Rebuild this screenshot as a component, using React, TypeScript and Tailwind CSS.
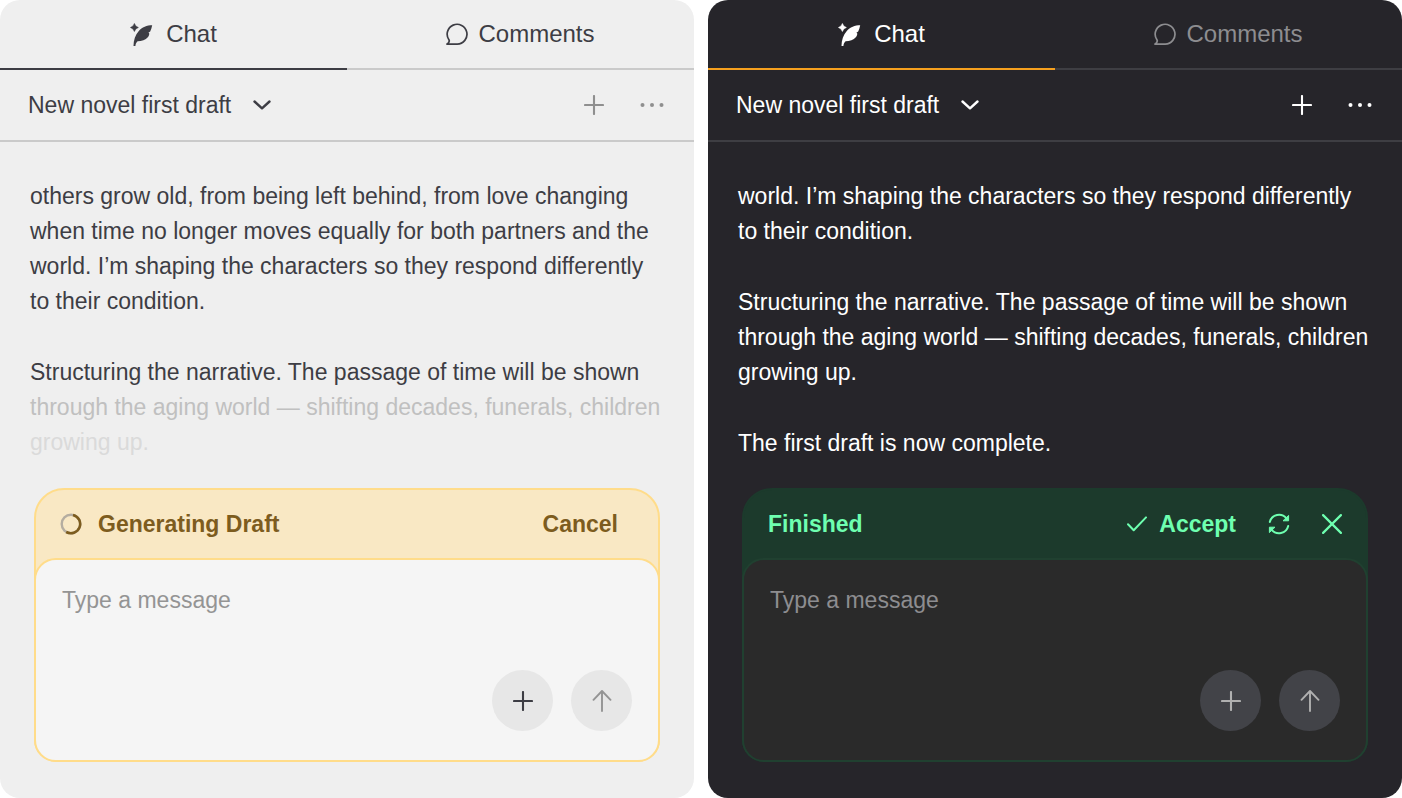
import React from 'react';
import clsx from 'clsx';

type Theme = 'light' | 'dark';

interface Line {
  text: string;
  tone?: 'faded' | 'faint';
}

interface ChatPanelProps {
  theme: Theme;
  paragraphs: Line[][];
  status: React.ReactNode;
}

const QuillIcon: React.FC = () => (
  <svg width="24" height="24" viewBox="0 0 24 24" fill="currentColor" aria-hidden="true">
    <path d="M4.4 1.4Q5.3 4.6 8.4 5.5Q5.3 6.4 4.4 9.6Q3.5 6.4 .4 5.5Q3.5 4.6 4.4 1.4Z" stroke="currentColor" strokeWidth=".5" />
    <path d="M22.2 3.3C17 3.3 12 5 8.6 9.2C5.4 13 3.5 18 3.5 24H5.4C5.6 21.8 6.3 20.4 7.6 19.2C11.5 19.2 15.8 18 17.8 15.2C18.7 14 19.3 12.8 19.3 11.4L18.4 10.8L20.2 9.4C21.1 7.5 21.8 5.5 22.2 3.3Z" />
  </svg>
);

const BubbleIcon: React.FC = () => (
  <svg width="22" height="22" viewBox="0 0 22 22" fill="none" stroke="currentColor" strokeWidth="1.7" strokeLinejoin="round" aria-hidden="true">
    <path d="M.9 21.1H11.2A9.9 9.9 0 1 0 2.9 16.8C3.9 18.3 3 19.6 .9 21.1Z" />
  </svg>
);

const ChevronIcon: React.FC = () => (
  <svg width="18" height="10" viewBox="0 0 18 10" fill="none" stroke="currentColor" strokeWidth="2.4" strokeLinecap="round" strokeLinejoin="round" aria-hidden="true">
    <path d="M1.5 1.5L9 8.3L16.5 1.5" />
  </svg>
);

const PlusIcon: React.FC = () => (
  <svg width="20" height="20" viewBox="0 0 20 20" fill="none" stroke="currentColor" strokeWidth="2.1" strokeLinecap="round" aria-hidden="true">
    <path d="M10 1V19M1 10H19" />
  </svg>
);

const DotsIcon: React.FC = () => (
  <svg width="24" height="20" viewBox="0 0 24 20" fill="currentColor" aria-hidden="true">
    <circle cx="2.5" cy="10" r="2" />
    <circle cx="12" cy="10" r="2" />
    <circle cx="21.5" cy="10" r="2" />
  </svg>
);

const ArrowUpIcon: React.FC = () => (
  <svg width="20" height="22" viewBox="0 0 20 22" fill="none" stroke="currentColor" strokeWidth="1.9" strokeLinecap="round" strokeLinejoin="round" aria-hidden="true">
    <path d="M10 21V1M1.5 9.8L10 1L18.5 9.8" />
  </svg>
);

const SpinnerIcon: React.FC = () => (
  <svg width="22" height="22" viewBox="0 0 22 22" fill="none" aria-hidden="true">
    <circle cx="11" cy="11" r="9.3" stroke="#b5ada0" strokeWidth="2.4" />
    <path d="M13 1.9A9.3 9.3 0 1 1 6.2 19" stroke="#7d5c1e" strokeWidth="2.6" />
  </svg>
);

const CheckIcon: React.FC = () => (
  <svg width="20" height="16" viewBox="0 0 20 16" fill="none" stroke="currentColor" strokeWidth="2" strokeLinecap="round" strokeLinejoin="round" aria-hidden="true">
    <path d="M1 8.3L6.7 14.3L19 1.4" />
  </svg>
);

const RefreshIcon: React.FC = () => (
  <svg width="22" height="22" viewBox="0 0 22 22" fill="none" stroke="currentColor" strokeWidth="2" strokeLinecap="round" strokeLinejoin="round" aria-hidden="true">
    <path d="M1.8 9A9.4 9.4 0 0 1 18.4 5.4M20.2 13A9.4 9.4 0 0 1 3.6 16.6" />
    <path d="M20.6 2.8V7.8H15.4ZM1.4 19.2V14.2H6.6Z" fill="currentColor" strokeWidth="1" />
  </svg>
);

const CloseIcon: React.FC = () => (
  <svg width="20" height="20" viewBox="0 0 20 20" fill="none" stroke="currentColor" strokeWidth="2.2" strokeLinecap="round" aria-hidden="true">
    <path d="M1.1 1.1L18.9 18.9M18.9 1.1L1.1 18.9" />
  </svg>
);

const ChatPanel: React.FC<ChatPanelProps> = ({ theme, paragraphs, status }) => {
  const dark = theme === 'dark';

  return (
    <section
      className={clsx(
        'flex min-w-0 flex-col overflow-hidden rounded-[20px]',
        dark ? 'bg-[#26252a] text-white' : 'bg-[#efefef] text-[#3d3d44]'
      )}
    >
      {/* Tabs */}
      <div className="grid h-[70px] grid-cols-2 text-[24px]">
        <button
          className={clsx(
            'flex items-center justify-center gap-3 border-b-2',
            dark ? 'border-[#f5a01e]' : 'border-[#3d3d44]'
          )}
        >
          <QuillIcon />
          <span>Chat</span>
        </button>
        <button
          className={clsx(
            'flex items-center justify-center gap-2.5 border-b-2',
            dark ? 'border-[#3e3e43] text-[#8d8d90]' : 'border-[#cacaca]'
          )}
        >
          <BubbleIcon />
          <span>Comments</span>
        </button>
      </div>

      {/* Conversation header */}
      <div
        className={clsx(
          'flex h-[72px] items-center justify-between border-b-2 pr-[30px] pl-7',
          dark ? 'border-[#3e3e43]' : 'border-[#cacaca]'
        )}
      >
        <button className="flex items-center gap-[22px]">
          <span>New novel first draft</span>
          <ChevronIcon />
        </button>
        <div className={clsx('flex items-center gap-9', !dark && 'text-[#8f8f8f]')}>
          <button aria-label="New chat"><PlusIcon /></button>
          <button aria-label="More options"><DotsIcon /></button>
        </div>
      </div>

      {/* Messages */}
      <div className="flex flex-1 flex-col gap-9 pt-[37px] pl-[30px] leading-[35px]">
        {paragraphs.map((lines, i) => (
          <p key={i}>
            {lines.map(line => (
              <span
                key={line.text}
                className={clsx(
                  'block whitespace-nowrap',
                  line.tone === 'faded' && 'text-[#c0c0c0]',
                  line.tone === 'faint' && 'text-[#dadada]'
                )}
              >
                {line.text}
              </span>
            ))}
          </p>
        ))}
      </div>

      {/* Composer */}
      <div
        className={clsx(
          'mx-[34px] mb-9 rounded-t-[30px] rounded-b-[22px] border-2',
          dark ? 'border-[#1c3a2c] bg-[#1c3a2c]' : 'border-[#ffdc8a] bg-[#f9e8c4]'
        )}
      >
        <div
          className={clsx(
            'flex h-[68px] items-center justify-between px-6 font-bold',
            dark ? 'text-[#6effb0]' : 'text-[#7d5c1e]'
          )}
        >
          {status}
        </div>
        <div
          className={clsx(
            '-mx-0.5 -mb-0.5 flex h-[204px] flex-col rounded-[22px] border-2 px-[26px] pt-6 pb-[29px]',
            dark ? 'border-[#204030] bg-[#2a2a2a]' : 'border-[#ffdc8a] bg-[#f5f5f5]'
          )}
        >
          <textarea
            aria-label="Message"
            placeholder="Type a message"
            className={clsx(
              'w-full flex-1 resize-none bg-transparent leading-8 outline-none',
              dark ? 'placeholder:text-[#8d8d90]' : 'placeholder:text-[#949494]'
            )}
          />
          <div className="flex justify-end gap-[18px]">
            <button
              aria-label="Add attachment"
              className={clsx(
                'flex size-[61px] items-center justify-center rounded-full',
                dark ? 'bg-[#424348] text-[#b0b0b0]' : 'bg-[#e7e7e7]'
              )}
            >
              <PlusIcon />
            </button>
            <button
              aria-label="Send"
              className={clsx(
                'flex size-[61px] items-center justify-center rounded-full',
                dark ? 'bg-[#424348] text-[#b0b0b0]' : 'bg-[#e7e7e7] text-[#949494]'
              )}
            >
              <ArrowUpIcon />
            </button>
          </div>
        </div>
      </div>
    </section>
  );
};

const lightParagraphs: Line[][] = [
  [
    { text: 'others grow old, from being left behind, from love changing' },
    { text: 'when time no longer moves equally for both partners and the' },
    { text: 'world. I’m shaping the characters so they respond differently' },
    { text: 'to their condition.' },
  ],
  [
    { text: 'Structuring the narrative. The passage of time will be shown' },
    { text: 'through the aging world — shifting decades, funerals, children', tone: 'faded' },
    { text: 'growing up.', tone: 'faint' },
  ],
];

const darkParagraphs: Line[][] = [
  [
    { text: 'world. I’m shaping the characters so they respond differently' },
    { text: 'to their condition.' },
  ],
  [
    { text: 'Structuring the narrative. The passage of time will be shown' },
    { text: 'through the aging world — shifting decades, funerals, children' },
    { text: 'growing up.' },
  ],
  [{ text: 'The first draft is now complete.' }],
];

export default function App() {
  return (
    <main className="grid min-h-screen grid-cols-2 gap-3.5 bg-white font-['Liberation_Sans',Arial,sans-serif] text-[23px] leading-8">
      <ChatPanel
        theme="light"
        paragraphs={lightParagraphs}
        status={
          <>
            <div className="flex items-center gap-4">
              <SpinnerIcon />
              <span>Generating Draft</span>
            </div>
            <button className="px-4">Cancel</button>
          </>
        }
      />
      <ChatPanel
        theme="dark"
        paragraphs={darkParagraphs}
        status={
          <>
            <span>Finished</span>
            <div className="flex items-center gap-8">
              <button className="flex items-center gap-3">
                <CheckIcon />
                <span>Accept</span>
              </button>
              <button aria-label="Regenerate"><RefreshIcon /></button>
              <button aria-label="Dismiss"><CloseIcon /></button>
            </div>
          </>
        }
      />
    </main>
  );
}
